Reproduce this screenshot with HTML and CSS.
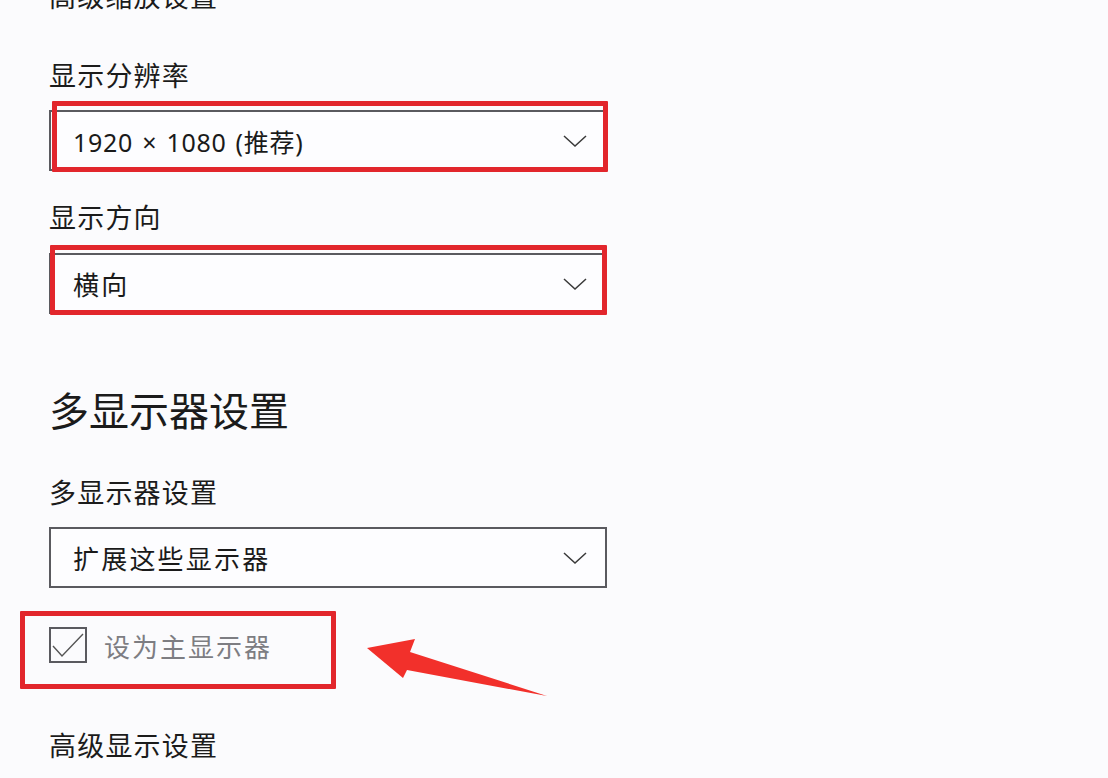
FILE: index.html
```html
<!DOCTYPE html>
<html lang="zh-CN">
<head>
<meta charset="utf-8">
<title>显示设置</title>
<link rel="stylesheet" href="styles.css">
</head>
<body>
<main class="page">
  <div class="label top-cut">高级缩放设置</div>

  <div class="label l-res">显示分辨率</div>
  <div class="select s-res">
    <span class="value">1920 × 1080 (推荐)</span>
    <svg class="chev" width="24" height="12" viewBox="0 0 24 12"><path d="M1 1 L12 11 L23 1" fill="none" stroke="#3a3a3a" stroke-width="1.5"/></svg>
    <span class="mark mark-res"></span>
  </div>

  <div class="label l-ori">显示方向</div>
  <div class="select s-ori">
    <span class="value">横向</span>
    <svg class="chev" width="24" height="12" viewBox="0 0 24 12"><path d="M1 1 L12 11 L23 1" fill="none" stroke="#3a3a3a" stroke-width="1.5"/></svg>
    <span class="mark mark-ori"></span>
  </div>

  <h2 class="heading">多显示器设置</h2>

  <div class="label l-multi">多显示器设置</div>
  <div class="select plain s-multi">
    <span class="value">扩展这些显示器</span>
    <svg class="chev" width="24" height="12" viewBox="0 0 24 12"><path d="M1 1 L12 11 L23 1" fill="none" stroke="#3a3a3a" stroke-width="1.5"/></svg>
  </div>

  <div class="check-row">
    <span class="checkbox">
      <svg width="34" height="32" viewBox="0 0 34 32"><path d="M2 17 L11 27 L32 5" fill="none" stroke="#555" stroke-width="1.4"/></svg>
    </span>
    <span class="check-text">设为主显示器</span>
    <span class="mark mark-check"></span>
    <svg class="arrow" width="190" height="70" viewBox="0 0 190 70">
      <polygon points="7,16 55,7 50,20 187,64 47,38 43,46" fill="#f2302b"/>
    </svg>
  </div>

  <div class="label l-adv">高级显示设置</div>
</main>
</body>
</html>
```

FILE: styles.css
```css
html, body {
  margin: 0;
  padding: 0;
  background: #fbfbfd;
}

body {
  width: 1108px;
  height: 778px;
  overflow: hidden;
  font-family: "Noto Sans", "Noto Sans CJK SC", sans-serif;
  color: #1b1b1b;
}

.page {
  display: flex;
  flex-direction: column;
  align-items: flex-start;
  padding-left: 49px;
}

.label {
  font-family: "Noto Sans CJK SC", sans-serif;
  font-size: 27px;
  line-height: 36px;
  height: 36px;
  letter-spacing: 1.2px;
  white-space: nowrap;
}

.top-cut { margin-top: -22px; }
.l-res { margin-top: 43px; }
.l-ori { margin-top: 28px; }
.l-multi { margin-top: 40px; }
.l-adv { margin-top: 64px; }

.select {
  position: relative;
  box-sizing: border-box;
  width: 558px;
  height: 61px;
  border: 2px solid #5a5a5f;
  background: #fdfdff;
  display: flex;
  align-items: center;
  justify-content: space-between;
  padding: 0 18px 0 22px;
}

.s-res { margin-top: 17px; }
.s-ori { margin-top: 18px; }
.s-multi { margin-top: 17px; }

.value {
  font-size: 25px;
  letter-spacing: 0.7px;
  word-spacing: 2px;
  white-space: nowrap;
  color: #1a1a1a;
}

.s-ori .value,
.s-multi .value {
  font-family: "Noto Sans CJK SC", sans-serif;
  font-size: 26px;
  letter-spacing: 2.2px;
  word-spacing: 0;
}

.chev {
  display: block;
  flex: none;
}

.mark {
  position: absolute;
  box-sizing: border-box;
  border: 5px solid #e2262c;
  border-radius: 1px;
  pointer-events: none;
}

.mark-res {
  left: 1px;
  top: -11px;
  width: 556px;
  height: 71px;
}

.mark-ori {
  left: -1px;
  top: -10px;
  width: 557px;
  height: 70px;
}

.heading {
  margin: 70px 0 0 0;
  font-family: "Noto Sans CJK SC", sans-serif;
  font-weight: 400;
  font-size: 40px;
  line-height: 50px;
  height: 50px;
  letter-spacing: 0px;
  color: #1b1b1b;
}

.check-row {
  position: relative;
  margin-top: 39px;
  height: 36px;
  display: flex;
  align-items: center;
  gap: 17px;
}

.checkbox {
  box-sizing: border-box;
  width: 38px;
  height: 36px;
  border: 2px solid #5a5a5f;
  display: flex;
  align-items: center;
  justify-content: center;
}

.checkbox svg { display: block; }

.check-text {
  font-family: "Noto Sans CJK SC", sans-serif;
  font-size: 26px;
  letter-spacing: 2px;
  color: #7d7d82;
  white-space: nowrap;
}

.mark-check {
  left: -29px;
  top: -16px;
  width: 316px;
  height: 78px;
}

.arrow {
  position: absolute;
  left: 311px;
  top: 5px;
  display: block;
}
```
